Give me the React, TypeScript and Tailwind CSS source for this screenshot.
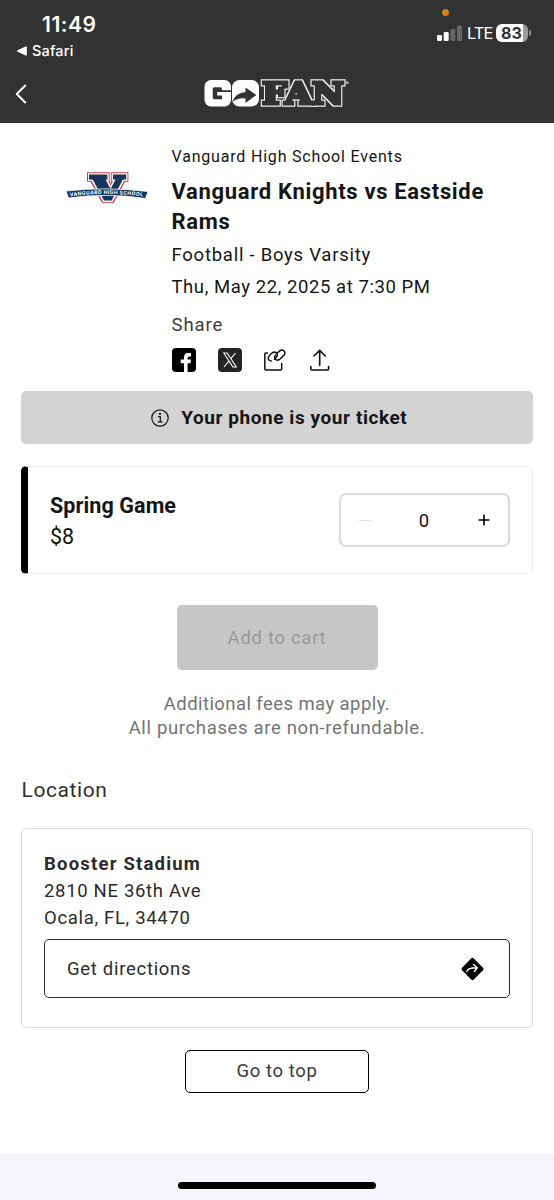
import { ChevronLeft } from "lucide-react";

function StatusBar() {
  return (
    <div className="flex h-[62px] justify-between font-['Inter',sans-serif] text-white">
      <div className="pt-[13px] pl-[17px]">
        <div className="pl-[25px] text-[21px] leading-6 font-semibold tracking-[0.5px]">11:49</div>
        <div className="mt-[4px] flex items-center gap-[5px] text-[14.5px] leading-5 font-medium tracking-[0.15px]">
          <svg width="10" height="10" viewBox="0 0 10 10" fill="currentColor">
            <path d="M0.6 4.3 L8.6 0.4 Q9.8 0.2 9.8 1.2 V8.8 Q9.8 9.8 8.6 9.6 L0.6 5.7 Q-0.4 5 0.6 4.3Z" />
          </svg>
          <span>Safari</span>
        </div>
      </div>
      <div className="pt-[9px] pr-[23px]">
        <div className="ml-[5px] h-[7px] w-[7px] rounded-full bg-[#d98213]" />
        <div className="mt-[7px] flex h-5 items-center">
          <svg width="25" height="16" viewBox="0 0 25 16">
            <rect x="0" y="10" width="5" height="6" rx="1.2" fill="#fff" />
            <rect x="6.7" y="7" width="5" height="9" rx="1.2" fill="#fff" />
            <rect x="13.3" y="4" width="5" height="12" rx="1.2" fill="#666" />
            <rect x="20" y="0.5" width="5" height="15.5" rx="1.2" fill="#666" />
          </svg>
          <span className="ml-[5px] w-6 text-[16.5px] leading-5 tracking-[-0.9px]">LTE</span>
          <div className="ml-[5px] flex h-[18px] w-8 items-center overflow-hidden rounded-[6px] bg-linear-to-r from-white from-84% to-[#9b9b9b] to-84%">
            <span className="ml-[5px] text-[16px] leading-[18px] font-bold text-[#323232]">83</span>
          </div>
          <div className="ml-px h-[6px] w-[2px] rounded-r-full bg-[#8c8c8c]" />
        </div>
      </div>
    </div>
  );
}

function GoFanLogo() {
  return (
    <svg className="overflow-visible" width="150" height="30" viewBox="0 0 150 30">
      <filter id="fan-outline" x="-5%" y="-20%" width="110%" height="140%">
        <feMorphology in="SourceAlpha" operator="dilate" radius="1" result="grow" />
        <feFlood floodColor="#f5f5f5" />
        <feComposite in2="grow" operator="in" result="edge" />
        <feMerge>
          <feMergeNode in="edge" />
          <feMergeNode in="SourceGraphic" />
        </feMerge>
      </filter>
      {/* white blocks with the mark cut into them */}
      <rect x="0.5" y="1" width="26.5" height="26.5" rx="6.5" fill="#fff" />
      <path d="M10.5 8.2 H16.2 Q18 8.2 18 10 V11.2 H27 V13 H13.2 V16.5 H18 V20.3 H10.5 Q8.7 20.3 8.7 18.5 V10 Q8.7 8.2 10.5 8.2Z" fill="#323232" />
      <rect x="28" y="1" width="27" height="26.5" rx="7.5" fill="#fff" />
      <path d="M28.5 23 Q31 14 41.5 13 V8.5 L52.5 16 L41.5 24 V19.5 Q34 18.5 28.5 23Z" fill="#323232" />
      <text x="58.3" y="24.5" textLength="81.5" lengthAdjust="spacingAndGlyphs" fontFamily="'DejaVu Serif', serif" fontWeight="700" fontSize="29" fill="#323232" stroke="#323232" strokeWidth="3.6" filter="url(#fan-outline)">FAN</text>
      <text x="141.5" y="5.5" fontFamily="Inter, sans-serif" fontSize="5" fill="#fff">®</text>
    </svg>
  );
}

function SchoolLogo() {
  return (
    <svg className="overflow-visible" width="84" height="34" viewBox="0 0 84 34">
      <filter id="v-outline" x="-20%" y="-20%" width="140%" height="140%">
        <feMorphology in="SourceAlpha" operator="dilate" radius="1" result="inner" />
        <feMorphology in="SourceAlpha" operator="dilate" radius="2" result="outer" />
        <feFlood floodColor="#d52b43" />
        <feComposite in2="outer" operator="in" result="red" />
        <feFlood floodColor="#fff" />
        <feComposite in2="inner" operator="in" result="white" />
        <feMerge>
          <feMergeNode in="red" />
          <feMergeNode in="white" />
          <feMergeNode in="SourceGraphic" />
        </feMerge>
      </filter>
      <text x="26.5" y="27" textLength="32" lengthAdjust="spacingAndGlyphs" fontFamily="'DejaVu Serif', serif" fontWeight="700" fontSize="32.5" fill="#13365f" stroke="#13365f" strokeWidth="3.6" filter="url(#v-outline)">V</text>
      <path d="M1 19 Q42 14.5 83 19.5 L80.5 26.5 Q42 20.5 3.5 26Z" fill="#13365f" stroke="#fff" strokeWidth="0.8" />
      <path id="ribbon" d="M5 24.4 Q42 19.4 79 24.6" fill="none" />
      <text fontFamily="Inter, sans-serif" fontSize="5" fontWeight="700" fill="#fff">
        <textPath href="#ribbon" textLength="73">VANGUARD HIGH SCHOOL</textPath>
      </text>
    </svg>
  );
}

function ShareIcons() {
  return (
    <div className="mt-[9px] flex h-6 items-center">
      <svg width="24" height="24" viewBox="0 0 24 24">
        <rect width="24" height="24" rx="4" fill="#000" />
        <path d="M12 24 V15.2 H8.7 V11.5 H12 V9.5 Q12 5 16.3 5 H19 V8.6 H17.2 Q15.6 8.6 15.6 10.2 V11.5 H19 L18.4 15.2 H15.6 V24Z" fill="#fff" />
      </svg>
      <svg className="ml-[22px]" width="24" height="24" viewBox="0 0 24 24">
        <rect width="24" height="24" rx="4" fill="#242424" />
        <path d="M5.8 5 H9.2 L18.3 19 H14.9Z M17.5 5 L12.8 10.6 M11.1 12.8 L6 19" fill="none" stroke="#fff" strokeWidth="1.1" />
      </svg>
      <svg className="ml-[21px]" width="24" height="24" viewBox="0 0 24 24" fill="none" stroke="#111" strokeWidth="1.5" strokeLinecap="round" strokeLinejoin="round">
        <path d="M4.5 5 H3 Q1.8 5 1.8 6.2 V20.8 Q1.8 22 3 22 H17.5 Q18.7 22 18.7 20.8 V15.5" />
        <path d="M8.2 13 Q4.3 12.3 5.5 9 Q6 7.8 8.2 5.8 Q10.5 3.3 12.8 4.5 Q15.5 6.1 13.5 9 L11.4 11.2" />
        <path d="M14.7 4.8 L16.4 3.1 Q18.8 0.9 21 2.9 Q23 5 20.7 7.4 L17.4 10.8 Q15 13.2 12.6 11.4 Q10.6 9.5 12.7 7.1" />
      </svg>
      <svg className="ml-[20px]" width="24" height="24" viewBox="0 0 24 24" fill="none" stroke="#111" strokeWidth="1.6" strokeLinecap="round" strokeLinejoin="round">
        <path d="M12.7 17.5 V2.5 M7 8 L12.7 2.4 L18.4 8" />
        <path d="M3.8 18.5 V21 Q3.8 22 4.8 22 H20.6 Q21.6 22 21.6 21 V18.5" />
      </svg>
    </div>
  );
}

export default function App() {
  return (
    <main className="flex min-h-[1200px] w-[554px] flex-col bg-white font-['Roboto',sans-serif] text-[#151515]">
      <header className="h-[123px] bg-[#323232]">
        <StatusBar />
        <div className="flex h-[61px] items-start pt-[17px]">
          <ChevronLeft className="ml-1 h-[34px] w-[34px] -translate-y-[2px] text-white" strokeWidth={1.4} />
          <div className="ml-[166px]">
            <GoFanLogo />
          </div>
        </div>
      </header>

      <section className="flex pt-[21px]">
        <div className="w-[171.5px] shrink-0 pt-7 pl-[65px]">
          <SchoolLogo />
        </div>
        <div>
          <p className="text-[16px] leading-[26px] tracking-[0.81px]">Vanguard High School Events</p>
          <h1 className="mt-[7px] w-[350px] text-[22px] leading-[30px] font-bold tracking-[0.67px]">
            <span className="block">Vanguard Knights vs Eastside</span>
            <span className="block">Rams</span>
          </h1>
          <p className="mt-[2px] text-[18.5px] leading-8 tracking-[0.75px]">Football - Boys Varsity</p>
          <p className="text-[18.5px] leading-8 tracking-[0.57px]">Thu, May 22, 2025 at 7:30 PM</p>
          <p className="mt-[8px] text-[18.5px] leading-7 tracking-[0.9px] text-[#3c3c3c]">Share</p>
          <ShareIcons />
        </div>
      </section>

      <div className="mr-[21.5px] ml-[21px] mt-[19px] flex h-[53px] items-center justify-center gap-[12px] rounded-[5px] bg-[#d3d3d3] pl-[5px]">
        <svg width="18" height="18" viewBox="0 0 18 18" fill="none" stroke="#151515" strokeWidth="1.2">
          <circle cx="9" cy="9" r="8.2" />
          <path d="M7 7.6 H9.3 V12.7 M6.8 12.8 H11.6" />
          <circle cx="9" cy="4.9" r="0.5" fill="#151515" />
        </svg>
        <span className="text-[19px] leading-6 font-bold tracking-[0.57px]">Your phone is your ticket</span>
      </div>

      <section className="mr-[21.5px] ml-[21px] mt-[22px] flex h-[108px] items-center justify-between rounded-[5px] border-[1.5px] border-l-[7px] border-[#ececec] border-l-black pr-[22px] pl-[22px]">
        <div className="pt-[2px]">
          <h2 className="text-[21.5px] leading-8 font-bold tracking-[0.1px]">Spring Game</h2>
          <p className="text-[21.5px] leading-[30px]">$8</p>
        </div>
        <div className="flex h-[54px] w-[171px] items-center justify-between rounded-[7px] border-[2.5px] border-[#dadada] px-[18px] text-[18.5px]">
          <span className="h-px w-3 bg-[#e0e0e0]" />
          <span className="pt-[3px]">0</span>
          <svg width="12" height="12" viewBox="0 0 12 12" stroke="#000" strokeWidth="1.6">
            <path d="M6 0.5 V11.5 M0.5 6 H11.5" />
          </svg>
        </div>
      </section>

      <button className="mt-[31px] h-[65px] w-[201px] self-center rounded-[5px] bg-[#c6c6c6] pt-[2px] text-[18.5px] tracking-[0.7px] text-[#9a9a9a]">
        Add to cart
      </button>
      <div className="mt-[22px] text-center text-[18.5px] leading-6 text-[#747474]">
        <p className="tracking-[0.42px]">Additional fees may apply.</p>
        <p className="tracking-[0.65px]">All purchases are non-refundable.</p>
      </div>

      <h2 className="mt-[35px] pl-[21.5px] text-[21px] leading-[30px] tracking-[0.6px] text-[#303030]">Location</h2>
      <section className="mr-[21.5px] ml-[21px] mt-[23px] h-[200px] rounded-[5px] border-[1.5px] border-[#dcdcdc] pr-[21.5px] pl-[22px] pt-[22px] text-[18.5px] leading-[27px] text-[#2b2b2b]">
        <p className="font-bold tracking-[1.2px]">Booster Stadium</p>
        <p className="tracking-[0.68px]">2810 NE 36th Ave</p>
        <p className="tracking-[0.68px]">Ocala, FL, 34470</p>
        <button className="mt-[7px] flex h-[59px] w-full items-center justify-between rounded-[5px] border-[1.5px] border-[#2b2b2b] pr-[25px] pl-[22px]">
          <span className="pt-px tracking-[0.7px]">Get directions</span>
          <svg width="23" height="24" viewBox="0 0 23 24">
            <path d="M10.2 1.5 Q11.5 0.2 12.8 1.5 L22 10.7 Q23 12 22 13.3 L12.8 22.5 Q11.5 23.8 10.2 22.5 L1 13.3 Q0 12 1 10.7Z" fill="#000" />
            <path d="M5.8 14.5 Q7.5 10.5 16 10.8 M12.5 7.5 L16.3 10.8 L13.3 14.5" fill="none" stroke="#fff" strokeWidth="1.4" strokeLinecap="round" />
          </svg>
        </button>
      </section>

      <button className="mt-[22px] h-[43px] w-[184px] self-center rounded-[5px] border-[1.5px] border-black text-[18.5px] tracking-[0.6px] text-[#3a3a3a]">
        Go to top
      </button>

      <footer className="mt-auto flex h-[46px] justify-center bg-[#f4f4fa] pt-7">
        <div className="h-[7px] w-[198px] rounded-full bg-black" />
      </footer>
    </main>
  );
}
